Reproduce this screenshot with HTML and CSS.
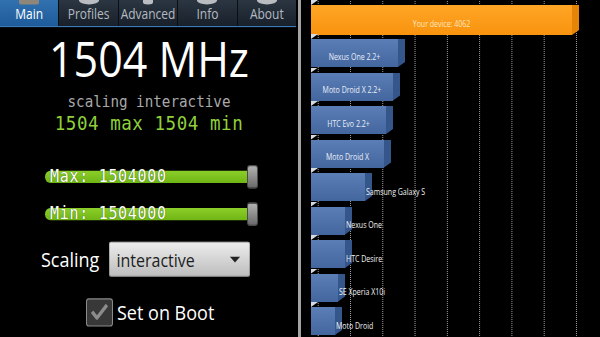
FILE: index.html
```html
<!DOCTYPE html>
<html>
<head>
<meta charset="utf-8">
<title>SetCPU and Quadrant</title>
<link rel="stylesheet" href="styles.css">
</head>
<body>
<div class="screen">
  <section class="cpu">
    <nav class="tabs">
      <div class="tab active"><span class="stub stub-main"></span><span class="tab-label">Main</span></div>
      <div class="tab"><span class="stub"></span><span class="tab-label">Profiles</span></div>
      <div class="tab"><span class="stub stub-small"></span><span class="tab-label">Advanced</span></div>
      <div class="tab"><span class="stub"></span><span class="tab-label">Info</span></div>
      <div class="tab"><span class="stub"></span><span class="tab-label">About</span></div>
    </nav>
    <div class="freq">1504 MHz</div>
    <div class="governor">scaling interactive</div>
    <div class="range">1504 max 1504 min</div>
    <div class="slider slider-max"><div class="track">Max: 1504000</div><div class="thumb"></div></div>
    <div class="slider slider-min"><div class="track">Min: 1504000</div><div class="thumb"></div></div>
    <div class="scaling-row">
      <span class="scaling-label">Scaling</span>
      <div class="spinner"><span>interactive</span><svg class="caret" width="12" height="5.3" viewBox="0 0 12 6"><path d="M0 0H12L6 6Z" fill="#222"/></svg></div>
    </div>
    <div class="boot-row">
      <span class="checkbox"><svg width="24" height="21.8" viewBox="0 0 24 22"><path d="M5 11 L10 16.5 L20 5" fill="none" stroke="#8c8c8c" stroke-width="3.2" stroke-linejoin="round"/></svg></span>
      <span class="boot-label">Set on Boot</span>
    </div>
  </section>
  <div class="divider"></div>
  <section class="chart">
    <div class="bar mine"><div class="front" style="width:261px"><span class="label">Your device: 4062</span></div><div class="side"></div></div>
    <div class="bar"><div class="front" style="width:87px"><span class="label">Nexus One 2.2+</span></div><div class="side"></div></div>
    <div class="bar"><div class="front" style="width:82px"><span class="label">Moto Droid X 2.2+</span></div><div class="side"></div></div>
    <div class="bar"><div class="front" style="width:75px"><span class="label">HTC Evo 2.2+</span></div><div class="side"></div></div>
    <div class="bar"><div class="front" style="width:73px"><span class="label">Moto Droid X</span></div><div class="side"></div></div>
    <div class="bar"><div class="front" style="width:54px"></div><div class="side"></div><span class="label outside">Samsung Galaxy S</span></div>
    <div class="bar"><div class="front" style="width:34px"></div><div class="side"></div><span class="label outside">Nexus One</span></div>
    <div class="bar"><div class="front" style="width:34px"></div><div class="side"></div><span class="label outside">HTC Desire</span></div>
    <div class="bar"><div class="front" style="width:27px"></div><div class="side"></div><span class="label outside">SE Xperia X10i</span></div>
    <div class="bar"><div class="front" style="width:24px"></div><div class="side"></div><span class="label outside">Moto Droid</span></div>
  </section>
</div>
</body>
</html>
```

FILE: styles.css
```css
html, body {
  margin: 0;
  padding: 0;
  background: #000;
}
body {
  width: 600px;
  height: 337px;
  overflow: hidden;
}
.screen {
  display: flex;
  width: 600px;
  height: 337px;
}

/* ---------- Left: SetCPU ---------- */
.cpu {
  flex: none;
  width: 298px;
  height: 298.2px;
  transform: scaleY(1.13);
  transform-origin: 0 0;
  display: flex;
  flex-direction: column;
  font-family: "Open Sans", "Noto Sans", sans-serif;
  color: #fff;
  background: #000;
}
.tabs {
  display: flex;
  width: 296px;
  height: 23px;
  border-bottom: 1px solid #3a78b8;
  background: linear-gradient(#2b3642, #18202a);
}
.tab {
  flex: 1;
  display: flex;
  flex-direction: column;
  align-items: center;
  border-left: 1px solid #0b0f14;
}
.tab:first-child { border-left: 0; }
.tab.active { background: linear-gradient(#3271b0, #1d5b9a); }
.stub {
  display: block;
  width: 20px;
  height: 3.5px;
  margin-bottom: 3.5px;
  border-radius: 0 0 10px 10px / 0 0 3.5px 3.5px;
  background: #b9bcc0;
}
.stub-main {
  background: #8e8678;
  border-radius: 0 0 2px 2px;
}
.stub-small { width: 10px; }
.tab-label {
  font-size: 12px;
  line-height: 12px;
  color: #b5bac0;
}
.tab.active .tab-label { color: #fff; }

.freq {
  margin-top: 6px;
  font-size: 43px;
  line-height: 43px;
  text-align: center;
  color: #fff;
}
.governor {
  margin-top: 8.8px;
  font-family: "DejaVu Sans Mono", monospace;
  font-size: 14.25px;
  line-height: 16px;
  text-align: center;
  color: #a9a9a9;
}
.range {
  font-family: "DejaVu Sans Mono", monospace;
  font-size: 17.5px;
  letter-spacing: 0.55px;
  line-height: 22px;
  text-align: center;
  color: #8fd03a;
}

.slider {
  display: flex;
  align-items: center;
  margin-left: 45px;
  width: 213px;
  height: 21.5px;
}
.slider-max { margin-top: 26px; }
.slider-min { margin-top: 11.3px; }
.track {
  flex: 0 0 204px;
  box-sizing: border-box;
  height: 10.7px;
  margin-right: -2px;
  padding-left: 5px;
  border-radius: 5.35px 0 0 5.35px;
  background: linear-gradient(#8ccf2a, #6fb514);
  font-family: "DejaVu Sans Mono", monospace;
  font-size: 15px;
  letter-spacing: 0.7px;
  line-height: 10.7px;
  white-space: nowrap;
  color: #fff;
  text-shadow: 0 0 1px #2d4d05;
}
.thumb {
  flex: none;
  width: 11px;
  height: 100%;
  box-sizing: border-box;
  border-radius: 3px;
  border: 1px solid #4a4a4a;
  background: linear-gradient(#b2b2b2, #6a6a6a);
}

.scaling-row {
  display: flex;
  align-items: center;
  gap: 10px;
  margin-top: 13.6px;
  margin-left: 41px;
}
.scaling-label {
  font-size: 18px;
  line-height: 31px;
  color: #fff;
}
.spinner {
  display: flex;
  align-items: center;
  justify-content: space-between;
  box-sizing: border-box;
  width: 141px;
  height: 31px;
  padding: 1.4px 9px 0 7px;
  border-radius: 2px;
  background: linear-gradient(#ededed, #bcbcbc);
  box-shadow: inset 0 0 0 1px rgba(0, 0, 0, 0.22);
  font-size: 16px;
  color: #1e1e1e;
}
.caret { display: block; }

.boot-row {
  display: flex;
  align-items: center;
  gap: 4px;
  margin-top: 19.7px;
  margin-left: 86px;
}
.checkbox {
  display: block;
  box-sizing: border-box;
  width: 27px;
  height: 24.8px;
  border: 1.5px solid #8a8a8a;
  border-radius: 3px;
  background: #383838;
}
.checkbox svg { display: block; }
.boot-label {
  font-size: 18px;
  line-height: 24.8px;
}

.divider {
  flex: none;
  width: 3px;
  background: #a4a4a4;
}

/* ---------- Right: Quadrant chart ---------- */
.chart {
  flex: 1;
  display: flex;
  flex-direction: column;
  padding: 5px 0 0 10px;
  background-color: #000;
  background-image:
    repeating-linear-gradient(180deg, #000 0 1px, transparent 1px 2px),
    linear-gradient(90deg, #a0a0a0 1px, transparent 1px);
  background-size: auto, 32.29px 100%;
  background-position: 0 0, 49px 0;
  background-repeat: repeat, repeat-x;
  font-family: "Open Sans", "Noto Sans", sans-serif;
}
.bar {
  position: relative;
  display: flex;
  flex: none;
  height: 28px;
  margin-bottom: 5.5px;
}
.bar.mine {
  height: 30px;
  margin-bottom: 4px;
}
.bar::before {
  content: "";
  position: absolute;
  left: 0;
  top: -5px;
  width: 7px;
  height: 5px;
  background: #d6dbe3;
  clip-path: polygon(0 0, 100% 0, 0 100%);
}
.front {
  flex: none;
  display: flex;
  align-items: center;
  justify-content: center;
  box-sizing: border-box;
  padding-top: 6px;
  background: linear-gradient(#5b7eb7, #43669f);
}
.side {
  flex: none;
  width: 7px;
  background: #35568b;
  clip-path: polygon(0 0, 100% 0, 100% calc(100% - 5px), 0 100%);
}
.mine .front { background: linear-gradient(#ffa526, #f8930e); }
.mine .side { background: #e4850a; }
.label {
  display: inline-block;
  font-size: 7px;
  line-height: 7px;
  white-space: nowrap;
  color: #e9eef6;
  transform: scaleY(1.3);
}
.mine .label { color: #ffe6bf; }
.label.outside {
  align-self: center;
  margin-left: -6px;
  padding-top: 6px;
  color: #f2f2f2;
}
```
